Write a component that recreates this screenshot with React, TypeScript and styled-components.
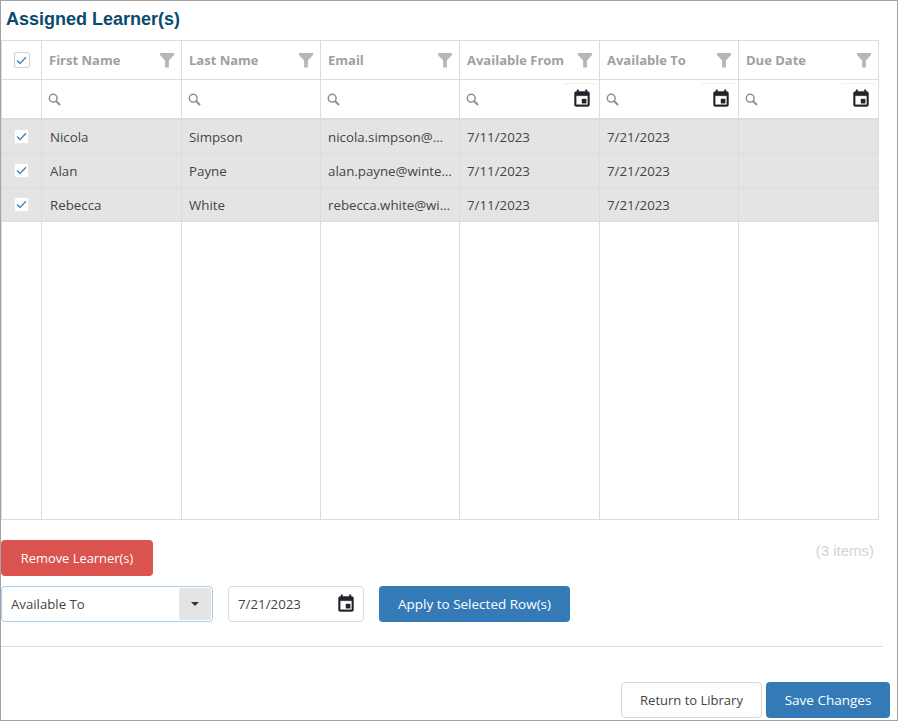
import React from "react";
import styled, { createGlobalStyle } from "styled-components";

const Global = createGlobalStyle`
  html, body { margin: 0; padding: 0; background: #fff; }
  body { font-family: "Open Sans", "Liberation Sans", sans-serif; font-size: 14px; color: #444; }
`;

const Frame = styled.div`
  box-sizing: border-box;
  width: 898px;
  height: 721px;
  border: 1px solid #a3a3a3;
  overflow: hidden;
`;

const Title = styled.h2`
  margin: 0;
  height: 39px;
  padding: 8px 0 0 5px;
  box-sizing: border-box;
  font: bold 18px/21px "Liberation Sans", Arial, sans-serif;
  color: #0b4a6f;
`;

const Grid = styled.div`
  display: grid;
  width: 878px;
  box-sizing: border-box;
  grid-template-columns: 40px 140px 139px 139px 140px 139px 140px;
  grid-template-rows: 39px 40px 34px 34px 34px 297px;
  border-top: 1px solid #dcdcdc;
  border-left: 1px solid #dcdcdc;
  border-bottom: 1px solid #dcdcdc;
`;

const Cell = styled.div`
  box-sizing: border-box;
  border-right: 1px solid #dcdcdc;
  border-bottom: 1px solid #dcdcdc;
  display: flex;
  align-items: center;
  min-width: 0;
`;

const HeaderCell = styled(Cell)`
  padding: 0 7px 0 7px;
  justify-content: space-between;
  font-weight: 700;
  font-size: 13px;
  color: #a0a0a0;
  white-space: nowrap;
`;

const CheckHeaderCell = styled(Cell)`
  justify-content: center;
`;

const FilterCell = styled(Cell)`
  position: relative;
  padding: 0 7px 0 6px;
  justify-content: space-between;
  border-bottom: 2px solid #dcdcdc;
`;

const BlankFilterCell = styled(Cell)`
  border-bottom: 2px solid #dcdcdc;
`;

const PickerEdge = styled.span`
  position: absolute;
  top: 3px;
  right: 1px;
  width: 36px;
  height: 4px;
  border-top: 1px solid #eeeeee;
  border-radius: 3px 3px 0 0;
`;

const DataCell = styled(Cell)<{ $lead?: boolean }>`
  background: #e4e4e4;
  padding: 0 7px 0 ${(p) => (p.$lead ? "8px" : "7px")};
  color: #444;
  font-size: 13.3px;
  white-space: nowrap;
`;

const DataCheckCell = styled(DataCell)`
  padding: 0;
  justify-content: center;
`;

const CellText = styled.span`
  overflow: hidden;
  text-overflow: ellipsis;
  white-space: nowrap;
`;

const EmptyCell = styled.div`
  border-right: 1px solid #dcdcdc;
`;

const CheckBox = styled.span<{ $outlined?: boolean }>`
  box-sizing: border-box;
  width: ${(p) => (p.$outlined ? "16px" : "15px")};
  height: ${(p) => (p.$outlined ? "16px" : "15px")};
  display: flex;
  align-items: center;
  justify-content: center;
  background: #fff;
  border: 1px solid ${(p) => (p.$outlined ? "#d0d0d0" : "#e8e8e8")};
  border-radius: 2px;
`;

const RemoveRow = styled.div`
  display: flex;
  justify-content: space-between;
  align-items: flex-start;
  margin-top: 20px;
  padding-right: 23px;
`;

const ItemCount = styled.span`
  font: 15px/17px "Liberation Sans", Arial, sans-serif;
  color: #d4d4d4;
  margin-top: 2px;
`;

const Button = styled.button<{ $kind: "danger" | "primary" | "default" }>`
  box-sizing: border-box;
  height: 36px;
  padding: 0;
  border-radius: 4px;
  font-family: "Open Sans", "Liberation Sans", sans-serif;
  font-size: 13.5px;
  background: ${(p) => (p.$kind === "danger" ? "#db534f" : p.$kind === "primary" ? "#337ab7" : "#fff")};
  color: ${(p) => (p.$kind === "default" ? "#444" : "#fff")};
  border: 1px solid ${(p) => (p.$kind === "default" ? "#d8d8d8" : "transparent")};
`;

const RemoveButton = styled(Button)`
  width: 152px;
  font-size: 12.9px;
`;

const ApplyRow = styled.div`
  display: flex;
  margin-top: 10px;
`;

const Select = styled.div`
  box-sizing: border-box;
  width: 212px;
  height: 36px;
  display: flex;
  align-items: center;
  justify-content: space-between;
  padding: 1px 1px 1px 9px;
  border: 1px solid #a9cde9;
  border-radius: 4px;
  font-size: 13.2px;
  color: #444;
`;

const SelectArrow = styled.span`
  width: 32px;
  height: 32px;
  background: #e4e4e4;
  border-radius: 3px;
  display: flex;
  align-items: center;
  justify-content: center;
`;

const Caret = styled.span`
  width: 0;
  height: 0;
  border-top: 4px solid #333;
  border-left: 4px solid transparent;
  border-right: 4px solid transparent;
`;

const DateField = styled.div`
  box-sizing: border-box;
  width: 136px;
  height: 36px;
  margin-left: 15px;
  display: flex;
  align-items: center;
  justify-content: space-between;
  padding: 0 7px 0 9px;
  border: 1px solid #dcdcdc;
  border-radius: 4px;
  font-size: 13.3px;
  color: #444;
`;

const ApplyButton = styled(Button)`
  width: 191px;
  margin-left: 15px;
`;

const Divider = styled.hr`
  width: 882px;
  height: 1px;
  border: 0;
  background: #dcdcdc;
  margin: 24px 0 0;
`;

const Footer = styled.div`
  display: flex;
  justify-content: flex-end;
  gap: 4px;
  margin-top: 35px;
  width: 889px;
`;

const ReturnButton = styled(Button)`
  width: 141px;
  font-size: 13px;
`;

const SaveButton = styled(Button)`
  width: 124px;
`;

const Check = () => (
  <svg width="11" height="9" viewBox="0 0 11 9" fill="none">
    <path d="M1 4.6 L4 7.4 L10 1.2" stroke="#3d84c6" strokeWidth="1.4" />
  </svg>
);

const Funnel = () => (
  <svg width="14" height="15" viewBox="0 0 15 15" preserveAspectRatio="none">
    <path d="M0 0 H15 V2 L9.5 7.5 V14.5 H5.5 V7.5 L0 2 Z" fill="#b6b6b6" />
  </svg>
);

const Search = () => (
  <svg width="13" height="13" viewBox="0 0 13 13" fill="none">
    <circle cx="5.2" cy="5.2" r="3.9" stroke="#8f8f8f" strokeWidth="1.5" />
    <path d="M8 8 L12 12" stroke="#8f8f8f" strokeWidth="1.9" />
  </svg>
);

const Calendar = () => (
  <svg width="20" height="20" viewBox="0 0 24 24" fill="#23232b">
    <path d="M17 12h-5v5h5v-5zM16 1v2H8V1H6v2H5c-1.11 0-1.99.9-1.99 2L3 19c0 1.1.89 2 2 2h14c1.1 0 2-.9 2-2V5c0-1.1-.9-2-2-2h-1V1h-2zm3 18H5V8h14v11z" stroke="#23232b" strokeWidth="0.5" />
  </svg>
);

const headers = [
  ["First Name", false],
  ["Last Name", false],
  ["Email", false],
  ["Available From", true],
  ["Available To", true],
  ["Due Date", true],
] as const;

const rows = [
  ["Nicola", "Simpson", "nicola.simpson@winterhaven.example", "7/11/2023", "7/21/2023", ""],
  ["Alan", "Payne", "alan.payne@winterhaven.example", "7/11/2023", "7/21/2023", ""],
  ["Rebecca", "White", "rebecca.white@winterhaven.example", "7/11/2023", "7/21/2023", ""],
];

export default function App() {
  return (
    <Frame>
      <Global />
      <Title>Assigned Learner(s)</Title>
      <Grid>
        <CheckHeaderCell>
          <CheckBox $outlined>
            <Check />
          </CheckBox>
        </CheckHeaderCell>
        {headers.map(([label]) => (
          <HeaderCell key={label}>
            <span>{label}</span>
            <Funnel />
          </HeaderCell>
        ))}
        <BlankFilterCell />
        {headers.map(([label, isDate]) => (
          <FilterCell key={label}>
            <Search />
            {isDate && (
              <>
                <PickerEdge />
                <Calendar />
              </>
            )}
          </FilterCell>
        ))}
        {rows.map((row) => (
          <React.Fragment key={row[0]}>
            <DataCheckCell>
              <CheckBox>
                <Check />
              </CheckBox>
            </DataCheckCell>
            {row.map((value, i) => (
              <DataCell key={i} $lead={i === 0}>
                <CellText>{value}</CellText>
              </DataCell>
            ))}
          </React.Fragment>
        ))}
        {Array.from({ length: 7 }, (_, i) => (
          <EmptyCell key={i} />
        ))}
      </Grid>
      <RemoveRow>
        <RemoveButton $kind="danger">Remove Learner(s)</RemoveButton>
        <ItemCount>(3 items)</ItemCount>
      </RemoveRow>
      <ApplyRow>
        <Select>
          <span>Available To</span>
          <SelectArrow>
            <Caret />
          </SelectArrow>
        </Select>
        <DateField>
          <span>7/21/2023</span>
          <Calendar />
        </DateField>
        <ApplyButton $kind="primary">Apply to Selected Row(s)</ApplyButton>
      </ApplyRow>
      <Divider />
      <Footer>
        <ReturnButton $kind="default">Return to Library</ReturnButton>
        <SaveButton $kind="primary">Save Changes</SaveButton>
      </Footer>
    </Frame>
  );
}
